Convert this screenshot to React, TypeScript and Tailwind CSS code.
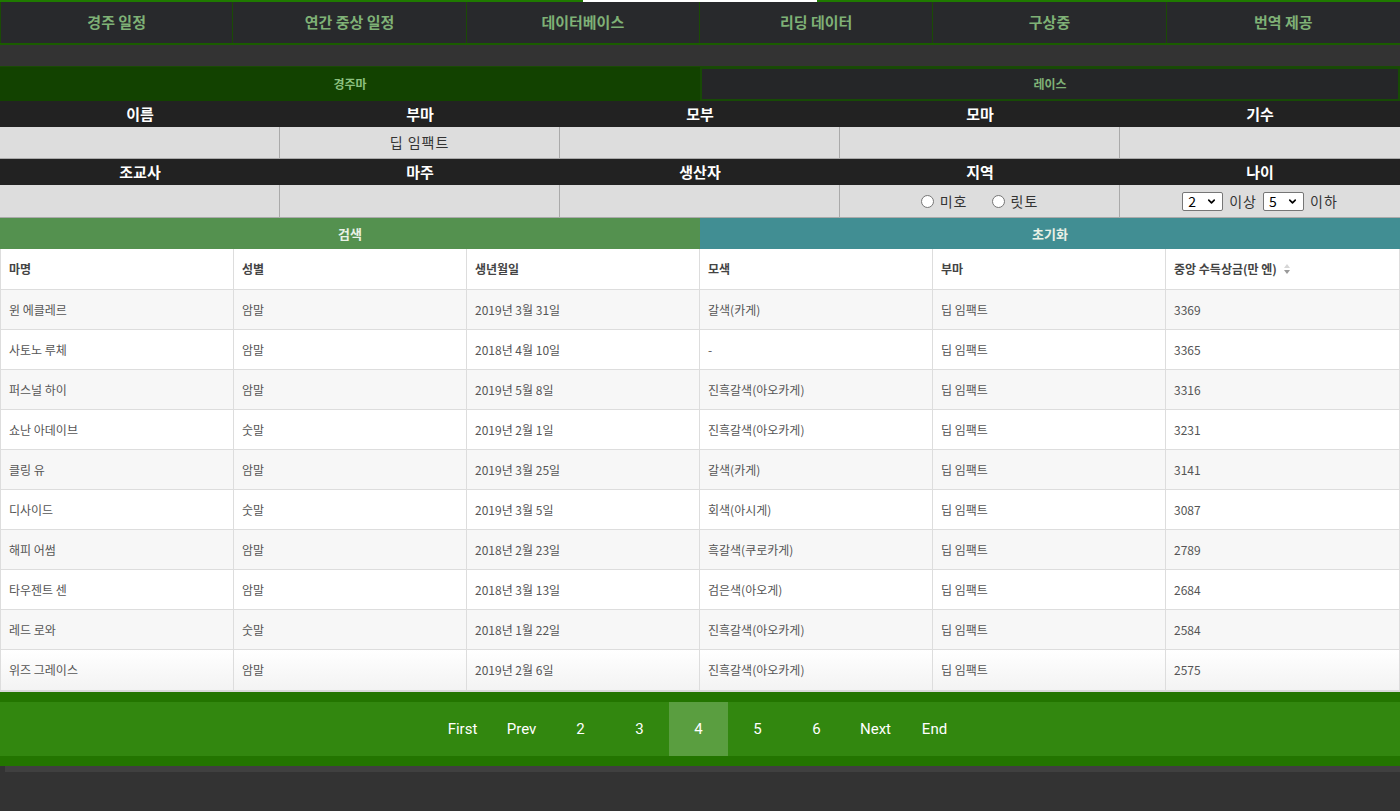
import { ChevronDown } from 'lucide-react'

const navItems = ['경주 일정', '연간 중상 일정', '데이터베이스', '리딩 데이터', '구상중', '번역 제공']

const rows = [
  ['윈 에클레르', '암말', '2019년 3월 31일', '갈색(카게)', '딥 임팩트', '3369'],
  ['사토노 루체', '암말', '2018년 4월 10일', '-', '딥 임팩트', '3365'],
  ['퍼스널 하이', '암말', '2019년 5월 8일', '진흑갈색(아오카게)', '딥 임팩트', '3316'],
  ['쇼난 아데이브', '숫말', '2019년 2월 1일', '진흑갈색(아오카게)', '딥 임팩트', '3231'],
  ['클링 유', '암말', '2019년 3월 25일', '갈색(카게)', '딥 임팩트', '3141'],
  ['디사이드', '숫말', '2019년 3월 5일', '회색(아시게)', '딥 임팩트', '3087'],
  ['해피 어썸', '암말', '2018년 2월 23일', '흑갈색(쿠로카게)', '딥 임팩트', '2789'],
  ['타우젠트 센', '암말', '2018년 3월 13일', '검은색(아오게)', '딥 임팩트', '2684'],
  ['레드 로와', '숫말', '2018년 1월 22일', '진흑갈색(아오카게)', '딥 임팩트', '2584'],
  ['위즈 그레이스', '암말', '2019년 2월 6일', '진흑갈색(아오카게)', '딥 임팩트', '2575'],
]

const pages = ['First', 'Prev', '2', '3', '4', '5', '6', 'Next', 'End']

function Select({ value }: { value: string }) {
  return (
    <span className="inline-flex items-center justify-between w-[41px] h-[19px] bg-white border border-[#767676] rounded-[2px] px-[5px] text-[14px] text-black leading-none">
      {value}
      <ChevronDown size={11} strokeWidth={3.5} className="text-black" />
    </span>
  )
}

function Radio({ label }: { label: string }) {
  return (
    <span className="inline-flex items-center gap-[6px]">
      <span className="w-[13px] h-[13px] rounded-full bg-white border border-[#767676]" />
      {label}
    </span>
  )
}

export default function App() {
  return (
    <div className="w-[1400px] h-[811px] bg-[#333333] overflow-hidden font-['Noto_Sans_CJK_KR','Noto_Sans',sans-serif]">
      {/* top bar */}
      <div className="h-[2px] bg-[#1f7a00] flex">
        <div className="w-[583px]" />
        <div className="w-[234px] bg-white" />
      </div>

      {/* nav */}
      <div className="grid grid-cols-6 h-[43px] bg-[#28292c] border-b-2 border-[#1a5c00]">
        {navItems.map((n, i) => (
          <div
            key={n}
            className={`flex items-center justify-center text-[15px] font-bold text-[#7fb176] border-[#1a4a05] ${i < 5 ? 'border-r' : ''} ${i === 0 ? 'border-l' : ''}`}
          >
            {n}
          </div>
        ))}
      </div>

      <div className="h-[21px] bg-[#333333]" />

      {/* tabs */}
      <div className="grid grid-cols-2 h-[35px] border-t border-[#1a4a05]">
        <div className="flex items-center justify-center bg-[#124200] text-[12px] font-bold text-[#8cc07f]">경주마</div>
        <div className="flex items-center justify-center bg-[#252628] border-2 border-[#174a05] text-[12px] font-bold text-[#7fb176]">레이스</div>
      </div>

      {/* form */}
      <div className="grid grid-cols-5 h-[26px] bg-[#222222] text-white text-[15px] font-bold">
        {['이름', '부마', '모부', '모마', '기수'].map((l) => (
          <div key={l} className="flex items-center justify-center">{l}</div>
        ))}
      </div>
      <div className="grid grid-cols-5 h-[32px] bg-[#dddddd] border-b border-[#aaaaaa] text-[14px] text-[#333] tracking-[1px]">
        <div className="border-r border-[#aaaaaa]" />
        <div className="border-r border-[#aaaaaa] flex items-center justify-center">딥 임팩트</div>
        <div className="border-r border-[#aaaaaa]" />
        <div className="border-r border-[#aaaaaa]" />
        <div />
      </div>
      <div className="grid grid-cols-5 h-[26px] bg-[#222222] text-white text-[15px] font-bold">
        {['조교사', '마주', '생산자', '지역', '나이'].map((l) => (
          <div key={l} className="flex items-center justify-center">{l}</div>
        ))}
      </div>
      <div className="grid grid-cols-5 h-[33px] bg-[#dddddd] border-b border-[#aaaaaa] text-[14px] text-[#333] tracking-[1px]">
        <div className="border-r border-[#aaaaaa]" />
        <div className="border-r border-[#aaaaaa]" />
        <div className="border-r border-[#aaaaaa]" />
        <div className="border-r border-[#aaaaaa] flex items-center justify-center gap-[24px]">
          <Radio label="미호" />
          <Radio label="릿토" />
        </div>
        <div className="flex items-center justify-center gap-[6px]">
          <Select value="2" />
          <span>이상</span>
          <Select value="5" />
          <span>이하</span>
        </div>
      </div>

      {/* buttons */}
      <div className="grid grid-cols-2 h-[31px] text-[13px] font-bold text-[#e9f1e7]">
        <div className="flex items-center justify-center bg-[#54914f]">검색</div>
        <div className="flex items-center justify-center bg-[#418e93]">초기화</div>
      </div>

      {/* table */}
      <div className="bg-white border-x border-[#dddddd] text-[12px] text-[#555]">
        <div className="grid grid-cols-6 h-[41px] border-b border-[#dddddd] font-bold text-[#444]">
          {['마명', '성별', '생년월일', '모색', '부마'].map((h) => (
            <div key={h} className="flex items-center px-[8px] border-r border-[#dddddd]">{h}</div>
          ))}
          <div className="flex items-center gap-[6px] px-[8px]">
            중앙 수득상금(만 엔)
            <svg width="8" height="12" viewBox="0 0 8 12">
              <path d="M4 1 L7 5 L1 5 Z" fill="#d6d6d6" />
              <path d="M4 11 L7 7 L1 7 Z" fill="#9a9a9a" />
            </svg>
          </div>
        </div>
        {rows.map((r, i) => (
          <div
            key={r[0]}
            className={`grid grid-cols-6 h-[40px] ${i < rows.length - 1 ? 'border-b border-[#dddddd]' : ''} ${i % 2 === 0 ? 'bg-[#f7f7f7]' : i === rows.length - 1 ? 'bg-gradient-to-b from-white to-[#f3f3f3]' : 'bg-white'}`}
          >
            {r.map((c, j) => (
              <div key={j} className={`flex items-center px-[8px] ${j < 5 ? 'border-r border-[#dddddd]' : ''}`}>{c}</div>
            ))}
          </div>
        ))}
      </div>
      <div className="h-[2px] bg-[#d9d9d9]" />

      {/* pagination */}
      <div className="bg-[#237500] py-[10px]">
        <div className="h-[54px] bg-[#32870f] flex justify-center pr-[3px]">
          {pages.map((p) => (
            <div
              key={p}
              className={`w-[59px] flex items-center justify-center text-[15px] text-white font-['Roboto',sans-serif] ${p === '4' ? 'bg-[#5a9e40]' : ''}`}
            >
              {p}
            </div>
          ))}
        </div>
      </div>
      <div className="h-[6px] ml-[5px] bg-[#404040]" />
    </div>
  )
}
